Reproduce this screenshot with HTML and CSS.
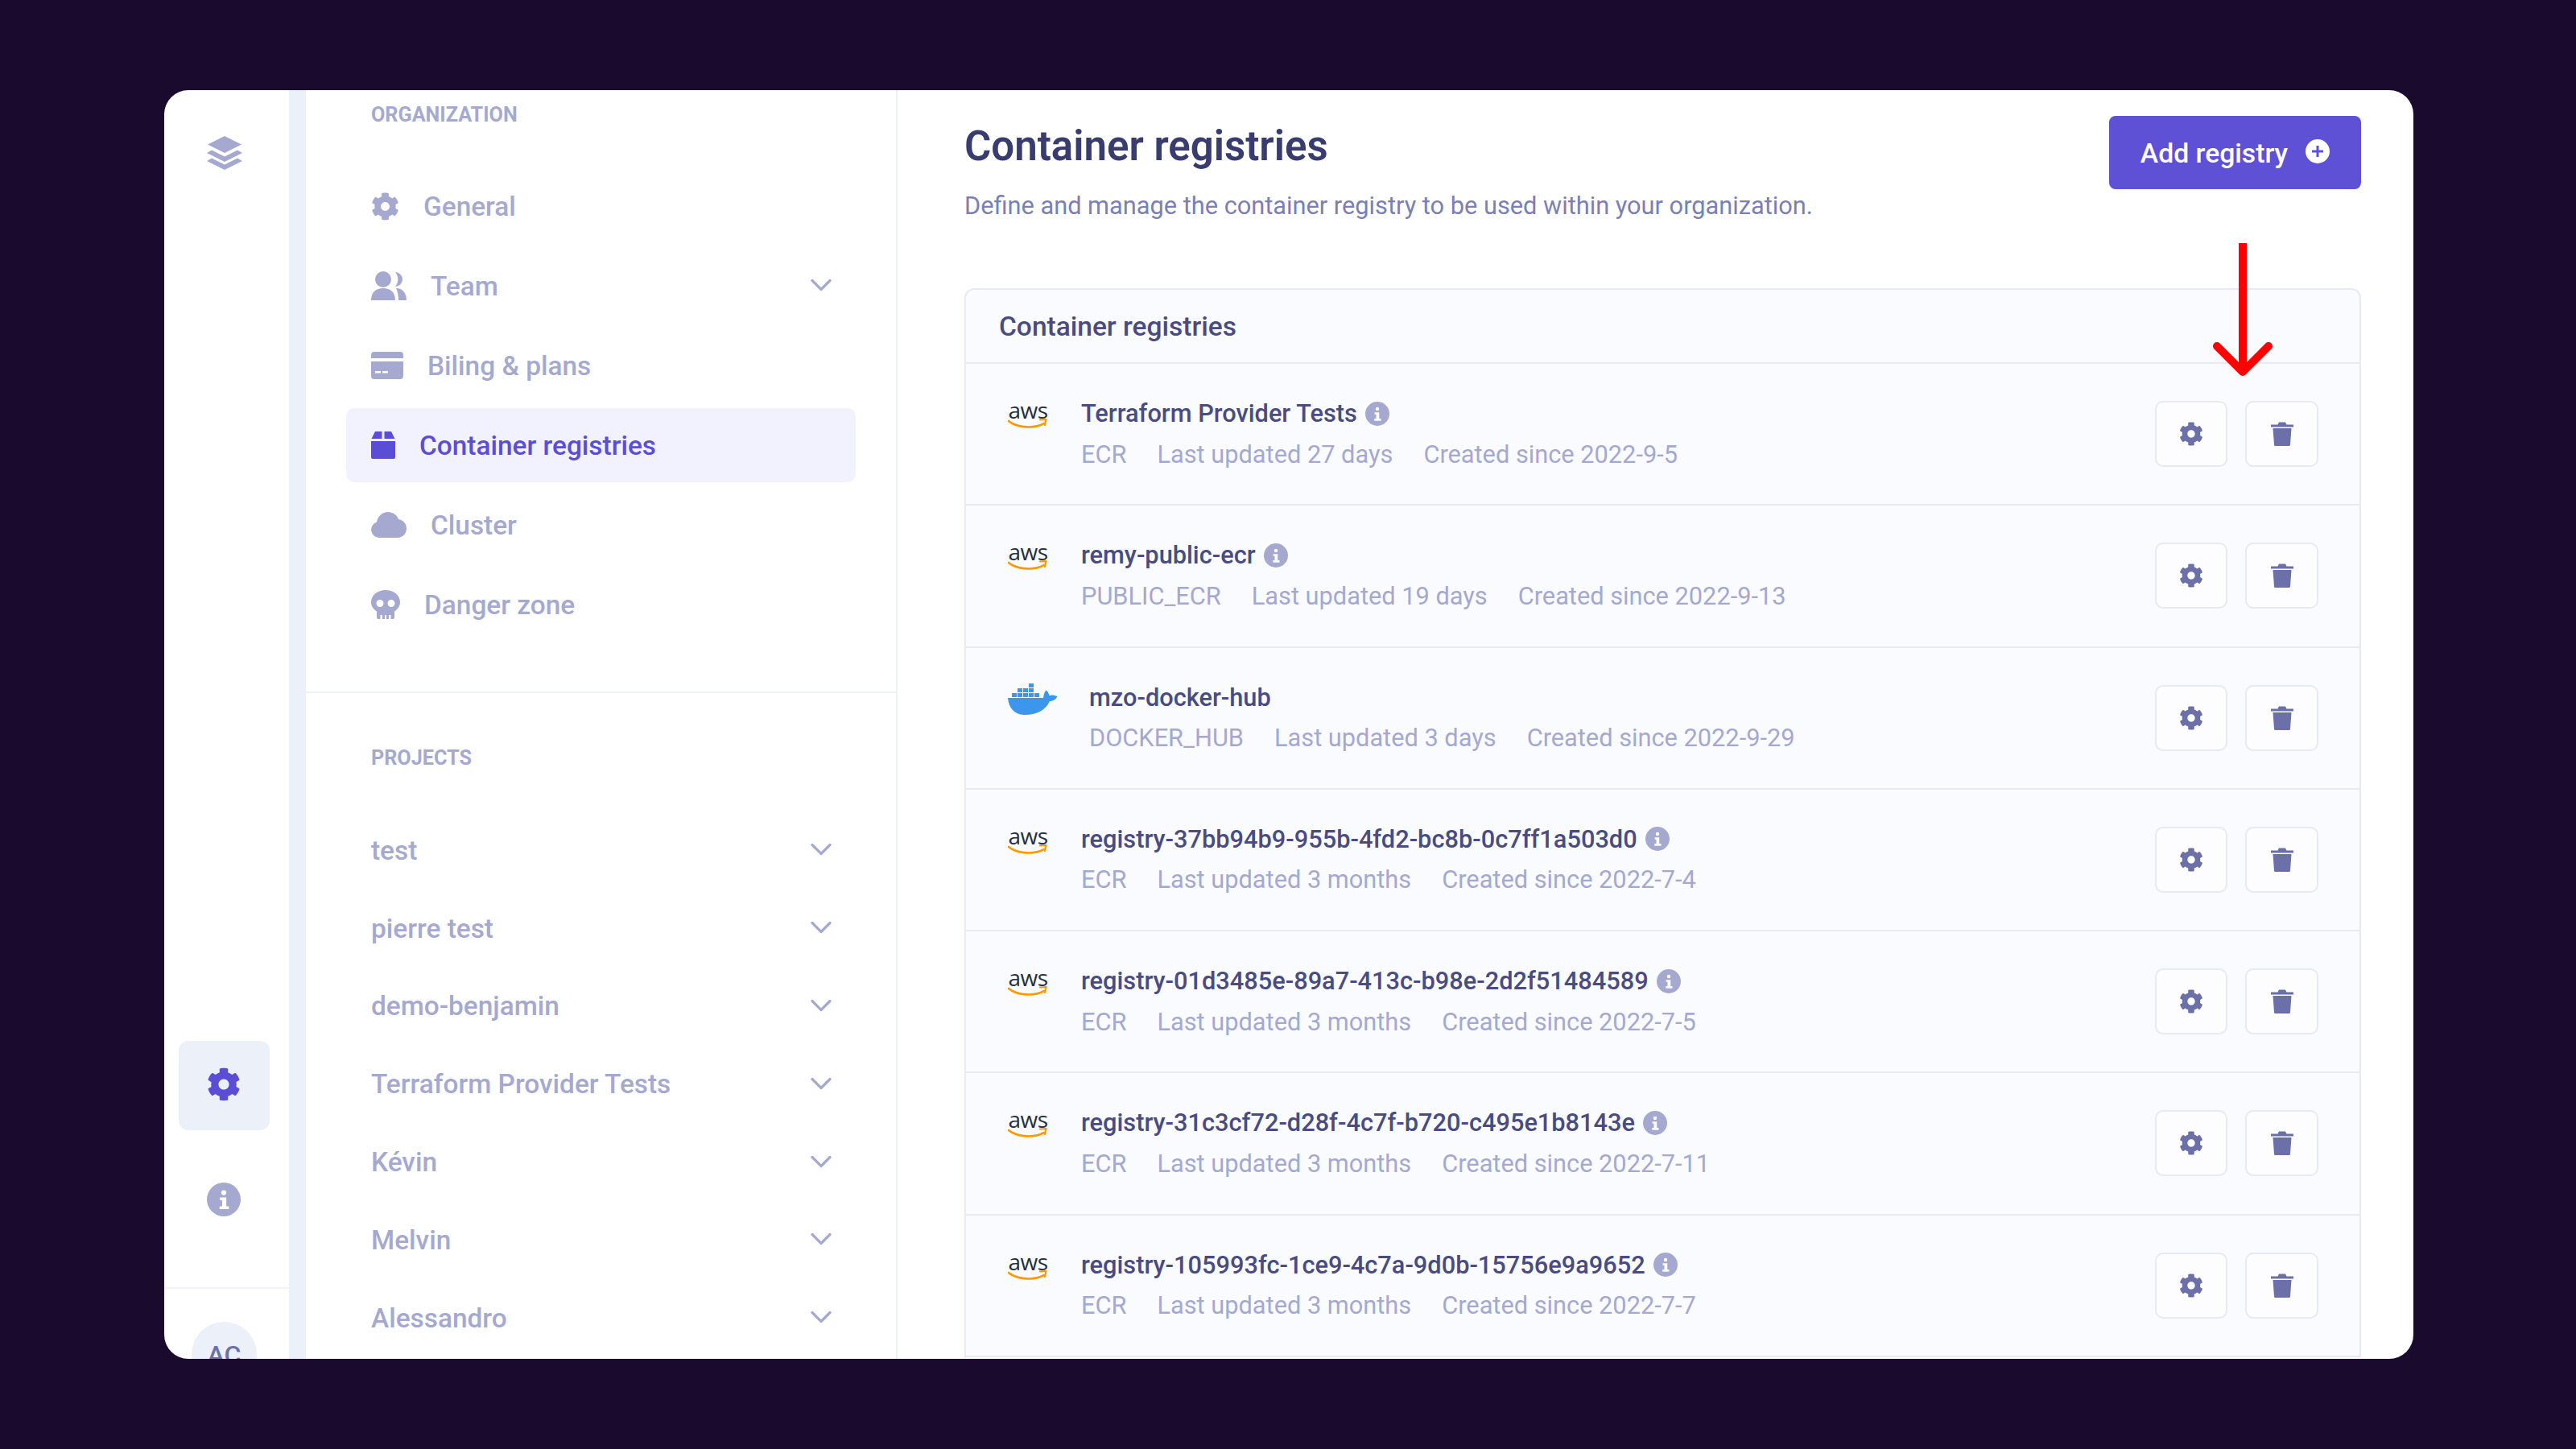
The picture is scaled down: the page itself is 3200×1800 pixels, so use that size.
FILE: index.html
```html
<!DOCTYPE html>
<html lang="en">
<head>
<meta charset="utf-8">
<title>Container registries</title>
<link rel="stylesheet" href="styles.css">
</head>
<body>
<svg class="sprite" aria-hidden="true">
  <symbol id="gear" viewBox="0 0 512 512"><path d="M487.4 315.7l-42.6-24.6c4.3-23.2 4.3-47 0-70.2l42.6-24.6c4.9-2.8 7.1-8.6 5.5-14-11.1-35.6-30-67.8-54.7-94.6-3.8-4.1-10-5.1-14.8-2.3L380.8 110c-17.9-15.4-38.5-27.3-60.8-35.1V25.8c0-5.6-3.9-10.5-9.4-11.7-36.7-8.2-74.3-7.8-109.2 0-5.5 1.2-9.4 6.1-9.4 11.7V75c-22.2 7.9-42.8 19.8-60.8 35.1L88.7 85.5c-4.9-2.8-11-1.9-14.8 2.3-24.7 26.7-43.6 58.9-54.7 94.6-1.7 5.4.6 11.2 5.5 14L67.3 221c-4.3 23.2-4.3 47 0 70.2l-42.6 24.6c-4.9 2.8-7.1 8.6-5.5 14 11.1 35.6 30 67.8 54.7 94.6 3.8 4.1 10 5.1 14.8 2.3l42.6-24.6c17.9 15.4 38.5 27.3 60.8 35.1v49.2c0 5.6 3.9 10.5 9.4 11.7 36.7 8.2 74.3 7.8 109.2 0 5.5-1.2 9.4-6.1 9.4-11.7v-49.2c22.2-7.9 42.8-19.8 60.8-35.1l42.6 24.6c4.9 2.8 11 1.9 14.8-2.3 24.7-26.7 43.6-58.9 54.7-94.6 1.5-5.5-.7-11.3-5.6-14.1zM256 336c-44.1 0-80-35.9-80-80s35.9-80 80-80 80 35.9 80 80-35.9 80-80 80z"/></symbol>
  <symbol id="info" viewBox="0 0 40 40"><path fill-rule="evenodd" d="M20 0a20 20 0 1 1 0 40a20 20 0 0 1 0-40zM20 9a3 3 0 1 0 0 6a3 3 0 0 0 0-6zM15.500 17.500v3.500h2.500v7h-3v3.500h11v-3.500h-3v-10.500z"/></symbol>
  <symbol id="trash" viewBox="0 0 28 30"><path d="M0 3.500h8.500l1.500-3h8l1.500 3h8.500v3h-28zM2.500 8h23l-1.500 20.500a1.500 1.500 0 0 1-1.500 1.500h-17a1.500 1.500 0 0 1-1.500-1.500z"/></symbol>
  <symbol id="chevron" viewBox="0 0 26 16"><path d="M2 2.500l11 11l11-11" fill="none" stroke="currentColor" stroke-width="3.200" stroke-linecap="round" stroke-linejoin="round"/></symbol>
  <symbol id="aws" viewBox="0 0 50 20"><path d="M1 4c8 7 29 11 44 3" fill="none" stroke="#f90" stroke-width="2.600" stroke-linecap="round"/><path d="M40 2.500l7.500-.5l-1.500 7" fill="none" stroke="#f90" stroke-width="2.200" stroke-linecap="round" stroke-linejoin="round"/></symbol>
  <symbol id="docker" viewBox="0 0 62 40">
    <path fill="#3d96ee" d="M0 19h44c.5-3 1-7 3.500-9.500c2.500 1.500 3.500 4 3.800 6.500c3-1 6.500-.8 10.200 1c-1.500 3.500-5 6-9.500 6C47 34 36 40 21 40C8 40 1 31 0 19z"/>
    <g fill="#3d96ee"><rect x="5" y="13" width="6" height="5"/><rect x="12" y="13" width="6" height="5"/><rect x="19" y="13" width="6" height="5"/><rect x="26" y="13" width="6" height="5"/><rect x="33" y="13" width="6" height="5"/><rect x="12" y="7" width="6" height="5"/><rect x="19" y="7" width="6" height="5"/><rect x="26" y="7" width="6" height="5"/><rect x="26" y="1" width="6" height="5"/></g>
  </symbol>
</svg>

<div class="app">
  <nav class="rail">
    <svg class="rail-logo" viewBox="0 0 44 42"><path d="M22 0l21 10.500l-21 10.500l-21-10.500z"/><path d="M6 17.500l16 8l16-8l6 3.500l-22 11l-22-11z"/><path d="M6 27.500l16 8l16-8l6 3.500l-22 11l-22-11z"/></svg>
    <div class="rail-links">
      <a class="rail-link rail-link-active"><svg class="rail-icon"><use href="#gear"/></svg></a>
      <a class="rail-link"><svg class="rail-icon"><use href="#info"/></svg></a>
    </div>
    <div class="rail-foot"><span class="avatar">AC</span></div>
  </nav>

  <aside class="side">
    <div class="side-group">
      <h4 class="side-label">ORGANIZATION</h4>
      <ul class="side-list side-list-org">
        <li class="side-item"><svg class="ic ic-gear"><use href="#gear"/></svg><span>General</span></li>
        <li class="side-item"><svg class="ic ic-team" viewBox="0 0 44 36"><circle cx="15" cy="10" r="10"/><path d="M30 1a9 9 0 0 1 0 18a14 14 0 0 0 0-18z"/><path d="M0 36c0-10 6-15 15-15s15 5 15 15z"/><path d="M31 21c8 0 13 6 13 15h-10c0-6-1-11-3-15z"/></svg><span>Team</span><svg class="chev"><use href="#chevron"/></svg></li>
        <li class="side-item"><svg class="ic ic-card" viewBox="0 0 40 34"><path d="M4 0h32a4 4 0 0 1 4 4v4h-40v-4a4 4 0 0 1 4-4z"/><path fill-rule="evenodd" d="M0 12h40v18a4 4 0 0 1-4 4h-32a4 4 0 0 1-4-4zM5 24v2.500h7v-2.500zM14 24v2.500h7v-2.500z"/></svg><span>Biling &amp; plans</span></li>
        <li class="side-item side-item-active"><svg class="ic ic-box" viewBox="0 0 30 34"><path d="M5 0h8.500v9h-13z"/><path d="M16.500 0h8.500l4.500 9h-13z"/><path d="M0 12h30v20a2 2 0 0 1-2 2h-26a2 2 0 0 1-2-2z"/></svg><span>Container registries</span></li>
        <li class="side-item"><svg class="ic ic-cloud" viewBox="0 0 44 32"><path d="M10 32a10 10 0 0 1-3-19.500c1-7 7-12.500 14-12.500c6 0 11 3.500 13 9c5.500 1 10 5 10 11.500c0 6.500-5 11.500-11 11.500z"/></svg><span>Cluster</span></li>
        <li class="side-item"><svg class="ic ic-skull" viewBox="0 0 36 36"><path fill-rule="evenodd" d="M18 0c10 0 18 6.500 18 15c0 5-3 9-7 11.500v7.500a2 2 0 0 1-2 2h-2.500v-5h-2.500v5h-3v-5h-2v5h-3v-5h-2.500v5h-2.500a2 2 0 0 1-2-2v-7.500c-4-2.500-7-6.500-7-11.500c0-8.500 8-15 18-15zM11 12a4.500 4.500 0 1 0 0 9a4.500 4.500 0 0 0 0-9zM25 12a4.500 4.500 0 1 0 0 9a4.500 4.500 0 0 0 0-9z"/></svg><span>Danger zone</span></li>
      </ul>
    </div>
    <div class="side-group side-group-projects">
      <h4 class="side-label">PROJECTS</h4>
      <ul class="side-list side-list-projects">
        <li class="side-item side-project"><span>test</span><svg class="chev"><use href="#chevron"/></svg></li>
        <li class="side-item side-project"><span>pierre test</span><svg class="chev"><use href="#chevron"/></svg></li>
        <li class="side-item side-project"><span>demo-benjamin</span><svg class="chev"><use href="#chevron"/></svg></li>
        <li class="side-item side-project"><span>Terraform Provider Tests</span><svg class="chev"><use href="#chevron"/></svg></li>
        <li class="side-item side-project"><span>Kévin</span><svg class="chev"><use href="#chevron"/></svg></li>
        <li class="side-item side-project"><span>Melvin</span><svg class="chev"><use href="#chevron"/></svg></li>
        <li class="side-item side-project"><span>Alessandro</span><svg class="chev"><use href="#chevron"/></svg></li>
      </ul>
    </div>
  </aside>

  <main class="main">
    <header class="head">
      <div>
        <h1 class="title">Container registries</h1>
        <p class="subtitle">Define and manage the container registry to be used within your organization.</p>
      </div>
      <button class="add"><span class="add-label">Add registry</span> <svg class="add-ic" viewBox="0 0 30 30"><path fill-rule="evenodd" d="M15 0a15 15 0 1 1 0 30a15 15 0 0 1 0-30zM13.500 8v5.500h-5.500v3h5.500v5.500h3v-5.500h5.500v-3h-5.500v-5.500z"/></svg></button>
    </header>

    <section class="card">
      <h2 class="card-title">Container registries</h2>

      <div class="row">
        <div class="logo logo-aws"><span class="aws-word">aws</span><svg class="aws-smile"><use href="#aws"/></svg></div>
        <div class="info">
          <div class="name">Terraform Provider Tests <svg class="name-ic"><use href="#info"/></svg></div>
          <div class="meta"><span>ECR</span><span>Last updated 27 days</span><span>Created since 2022-9-5</span></div>
        </div>
        <div class="actions"><button class="act"><svg class="act-gear"><use href="#gear"/></svg></button><button class="act act-wide"><svg class="act-trash"><use href="#trash"/></svg></button></div>
      </div>

      <div class="row">
        <div class="logo logo-aws"><span class="aws-word">aws</span><svg class="aws-smile"><use href="#aws"/></svg></div>
        <div class="info">
          <div class="name">remy-public-ecr <svg class="name-ic"><use href="#info"/></svg></div>
          <div class="meta"><span>PUBLIC_ECR</span><span>Last updated 19 days</span><span>Created since 2022-9-13</span></div>
        </div>
        <div class="actions"><button class="act"><svg class="act-gear"><use href="#gear"/></svg></button><button class="act act-wide"><svg class="act-trash"><use href="#trash"/></svg></button></div>
      </div>

      <div class="row">
        <div class="logo logo-docker"><svg class="docker"><use href="#docker"/></svg></div>
        <div class="info">
          <div class="name">mzo-docker-hub</div>
          <div class="meta"><span>DOCKER_HUB</span><span>Last updated 3 days</span><span>Created since 2022-9-29</span></div>
        </div>
        <div class="actions"><button class="act"><svg class="act-gear"><use href="#gear"/></svg></button><button class="act act-wide"><svg class="act-trash"><use href="#trash"/></svg></button></div>
      </div>

      <div class="row">
        <div class="logo logo-aws"><span class="aws-word">aws</span><svg class="aws-smile"><use href="#aws"/></svg></div>
        <div class="info">
          <div class="name">registry-37bb94b9-955b-4fd2-bc8b-0c7ff1a503d0 <svg class="name-ic"><use href="#info"/></svg></div>
          <div class="meta"><span>ECR</span><span>Last updated 3 months</span><span>Created since 2022-7-4</span></div>
        </div>
        <div class="actions"><button class="act"><svg class="act-gear"><use href="#gear"/></svg></button><button class="act act-wide"><svg class="act-trash"><use href="#trash"/></svg></button></div>
      </div>

      <div class="row">
        <div class="logo logo-aws"><span class="aws-word">aws</span><svg class="aws-smile"><use href="#aws"/></svg></div>
        <div class="info">
          <div class="name">registry-01d3485e-89a7-413c-b98e-2d2f51484589 <svg class="name-ic"><use href="#info"/></svg></div>
          <div class="meta"><span>ECR</span><span>Last updated 3 months</span><span>Created since 2022-7-5</span></div>
        </div>
        <div class="actions"><button class="act"><svg class="act-gear"><use href="#gear"/></svg></button><button class="act act-wide"><svg class="act-trash"><use href="#trash"/></svg></button></div>
      </div>

      <div class="row">
        <div class="logo logo-aws"><span class="aws-word">aws</span><svg class="aws-smile"><use href="#aws"/></svg></div>
        <div class="info">
          <div class="name">registry-31c3cf72-d28f-4c7f-b720-c495e1b8143e <svg class="name-ic"><use href="#info"/></svg></div>
          <div class="meta"><span>ECR</span><span>Last updated 3 months</span><span>Created since 2022-7-11</span></div>
        </div>
        <div class="actions"><button class="act"><svg class="act-gear"><use href="#gear"/></svg></button><button class="act act-wide"><svg class="act-trash"><use href="#trash"/></svg></button></div>
      </div>

      <div class="row">
        <div class="logo logo-aws"><span class="aws-word">aws</span><svg class="aws-smile"><use href="#aws"/></svg></div>
        <div class="info">
          <div class="name">registry-105993fc-1ce9-4c7a-9d0b-15756e9a9652 <svg class="name-ic"><use href="#info"/></svg></div>
          <div class="meta"><span>ECR</span><span>Last updated 3 months</span><span>Created since 2022-7-7</span></div>
        </div>
        <div class="actions"><button class="act"><svg class="act-gear"><use href="#gear"/></svg></button><button class="act act-wide"><svg class="act-trash"><use href="#trash"/></svg></button></div>
      </div>
    </section>
  </main>

  <svg class="arrow" viewBox="0 0 80 170"><path d="M40 0v160" fill="none" stroke="#f00" stroke-width="10"/><path d="M8 128l32 32l32-32" fill="none" stroke="#f00" stroke-width="10" stroke-linecap="round" stroke-linejoin="round"/></svg>
</div>
</body>
</html>
```

FILE: styles.css
```css
* { box-sizing: border-box; }
html, body { margin: 0; padding: 0; }
body {
  width: 3200px;
  height: 1800px;
  padding: 112px 202px 112px 204px;
  background: #1a0b2e;
  font-family: Roboto, "Liberation Sans", sans-serif;
  color: #a5a9d0;
  overflow: hidden;
}
.sprite { display: none; }
h1, h2, h4, p, ul { margin: 0; padding: 0; }
ul { list-style: none; }

.app {
  position: relative;
  display: flex;
  width: 2794px;
  height: 1576px;
  background: #fff;
  border-radius: 30px;
  overflow: hidden;
}

/* Rail */
.rail {
  flex: none;
  display: flex;
  flex-direction: column;
  align-items: center;
  width: 176px;
  border-right: 21px solid #ecf0f9;
}
.rail-logo { width: 44px; height: 42px; margin: 57px 6px 0 0; fill: #a5a9d0; }
.rail-links {
  margin: auto 7px 52px 0;
  display: flex;
  flex-direction: column;
  gap: 32px;
}
.rail-link {
  display: flex;
  align-items: center;
  justify-content: center;
  width: 113px;
  height: 111px;
  padding-bottom: 3px;
  border-radius: 12px;
  fill: #a5a9d0;
}
.rail-link-active { background: #ecf0f9; fill: #5b4dd6; }
.rail-icon { width: 42px; height: 42px; }
.rail-foot {
  align-self: stretch;
  display: flex;
  justify-content: center;
  height: 89px;
  padding: 41px 6px 0 0;
  border-top: 2px solid #f0f2fa;
}
.avatar {
  flex: none;
  display: flex;
  align-items: center;
  justify-content: center;
  width: 81px;
  height: 81px;
  border-radius: 50%;
  background: #ecf0f9;
  color: #6b70a8;
  font-size: 32px;
  font-weight: 500;
}

/* Sidebar */
.side {
  flex: none;
  width: 735px;
  padding-top: 16px;
  border-right: 2px solid #eef1f8;
}
.side-group { padding: 0 50px; }
.side-group-projects {
  margin-top: 62px;
  padding-top: 66px;
  border-top: 2px solid #eef1f8;
}
.side-label {
  height: 30px;
  padding-left: 31px;
  font-size: 25.200px;
  line-height: 30px;
  font-weight: 700;
  color: #a5a9d0;
}
.side-list-org {
  display: flex;
  flex-direction: column;
  gap: 7px;
  margin-top: 52px;
}
.side-list-projects { margin-top: 51px; }
.side-item {
  display: flex;
  align-items: center;
  gap: 30px;
  height: 92px;
  padding: 0 30px 0 31px;
  border-radius: 10px;
  font-size: 33.400px;
  font-weight: 500;
  fill: #a5a9d0;
}
.side-project { height: 96.800px; }
.side-item-active { background: #f1f2fd; color: #5b4dd6; fill: #5b4dd6; }
.ic { flex: none; }
.ic-gear { width: 35px; height: 35px; }
.ic-team { width: 44px; height: 36px; }
.ic-card { width: 40px; height: 34px; }
.ic-box { width: 30px; height: 34px; }
.ic-cloud { width: 44px; height: 32px; }
.ic-skull { width: 36px; height: 36px; }
.chev { flex: none; width: 26px; height: 16px; margin-left: auto; margin-top: -2px; }

/* Main */
.main {
  flex: 1;
  min-width: 0;
  padding: 32px 65px 0 83px;
}
.head {
  display: flex;
  justify-content: space-between;
  align-items: flex-start;
  height: 214px;
}
.title {
  margin-top: 7px;
  font-size: 51px;
  line-height: 62px;
  font-weight: 600;
  color: #383c6e;
}
.subtitle {
  margin-top: 23px;
  font-size: 30.750px;
  line-height: 40px;
  color: #7b7fb4;
}
.add {
  display: flex;
  align-items: center;
  justify-content: center;
  gap: 22px;
  width: 313px;
  height: 91px;
  border: 0;
  border-radius: 8px;
  background: #5f51d6;
  color: #fff;
  fill: #fff;
  font-family: inherit;
  font-size: 33.700px;
  font-weight: 500;
}
.add-label { margin-top: 2px; }
.add-ic { width: 30px; height: 30px; margin-top: -4px; }

.card {
  border: 2px solid #e6eaf4;
  border-bottom: 0;
  border-radius: 12px 12px 0 0;
  background: #fafbfe;
}
.card-title {
  height: 92px;
  padding-left: 41px;
  border-bottom: 2px solid #e6eaf4;
  font-size: 33.500px;
  line-height: 92px;
  font-weight: 500;
  color: #4a4c80;
}
.row {
  display: flex;
  align-items: center;
  height: 176.250px;
  padding: 0 51px 0 52px;
  border-bottom: 2px solid #e6eaf4;
}
.logo { flex: none; align-self: flex-start; margin-right: 41px; margin-top: 44px; }
.logo-aws { position: relative; width: 50px; height: 40px; }
.logo-docker { width: 62px; height: 40px; margin: 43px 39px 0 0; }
.aws-word {
  display: block;
  font-size: 28px;
  line-height: 26px;
  letter-spacing: -0.5px;
  text-align: center;
  color: #252f3e;
  font-family: "Open Sans", Roboto, sans-serif;
}
.aws-smile { display: block; width: 50px; height: 20px; margin-top: -3px; }
.docker { display: block; width: 62px; height: 40px; }
.info { flex: 1; min-width: 0; }
.name {
  display: flex;
  align-items: center;
  gap: 10px;
  height: 34px;
  font-size: 30.750px;
  font-weight: 500;
  color: #4a4c80;
  white-space: nowrap;
}
.name-ic { width: 30px; height: 30px; fill: #a5a9d0; }
.meta {
  display: flex;
  gap: 38px;
  height: 34px;
  margin-top: 17px;
  font-size: 30.750px;
  line-height: 34px;
  color: #a5a9d0;
  white-space: nowrap;
}
.actions { flex: none; display: flex; gap: 22px; }
.act {
  display: flex;
  align-items: center;
  justify-content: center;
  width: 90px;
  height: 82px;
  padding: 0;
  border: 2px solid #e6eaf4;
  border-radius: 10px;
  background: #fdfdff;
  fill: #6b70a8;
}
.act-wide { width: 91px; }
.act-gear { width: 30px; height: 30px; }
.act-trash { width: 28px; height: 30px; }

/* Annotation arrow drawn over the page */
.arrow {
  position: absolute;
  left: 2542px;
  top: 190px;
  width: 80px;
  height: 170px;
}
```
